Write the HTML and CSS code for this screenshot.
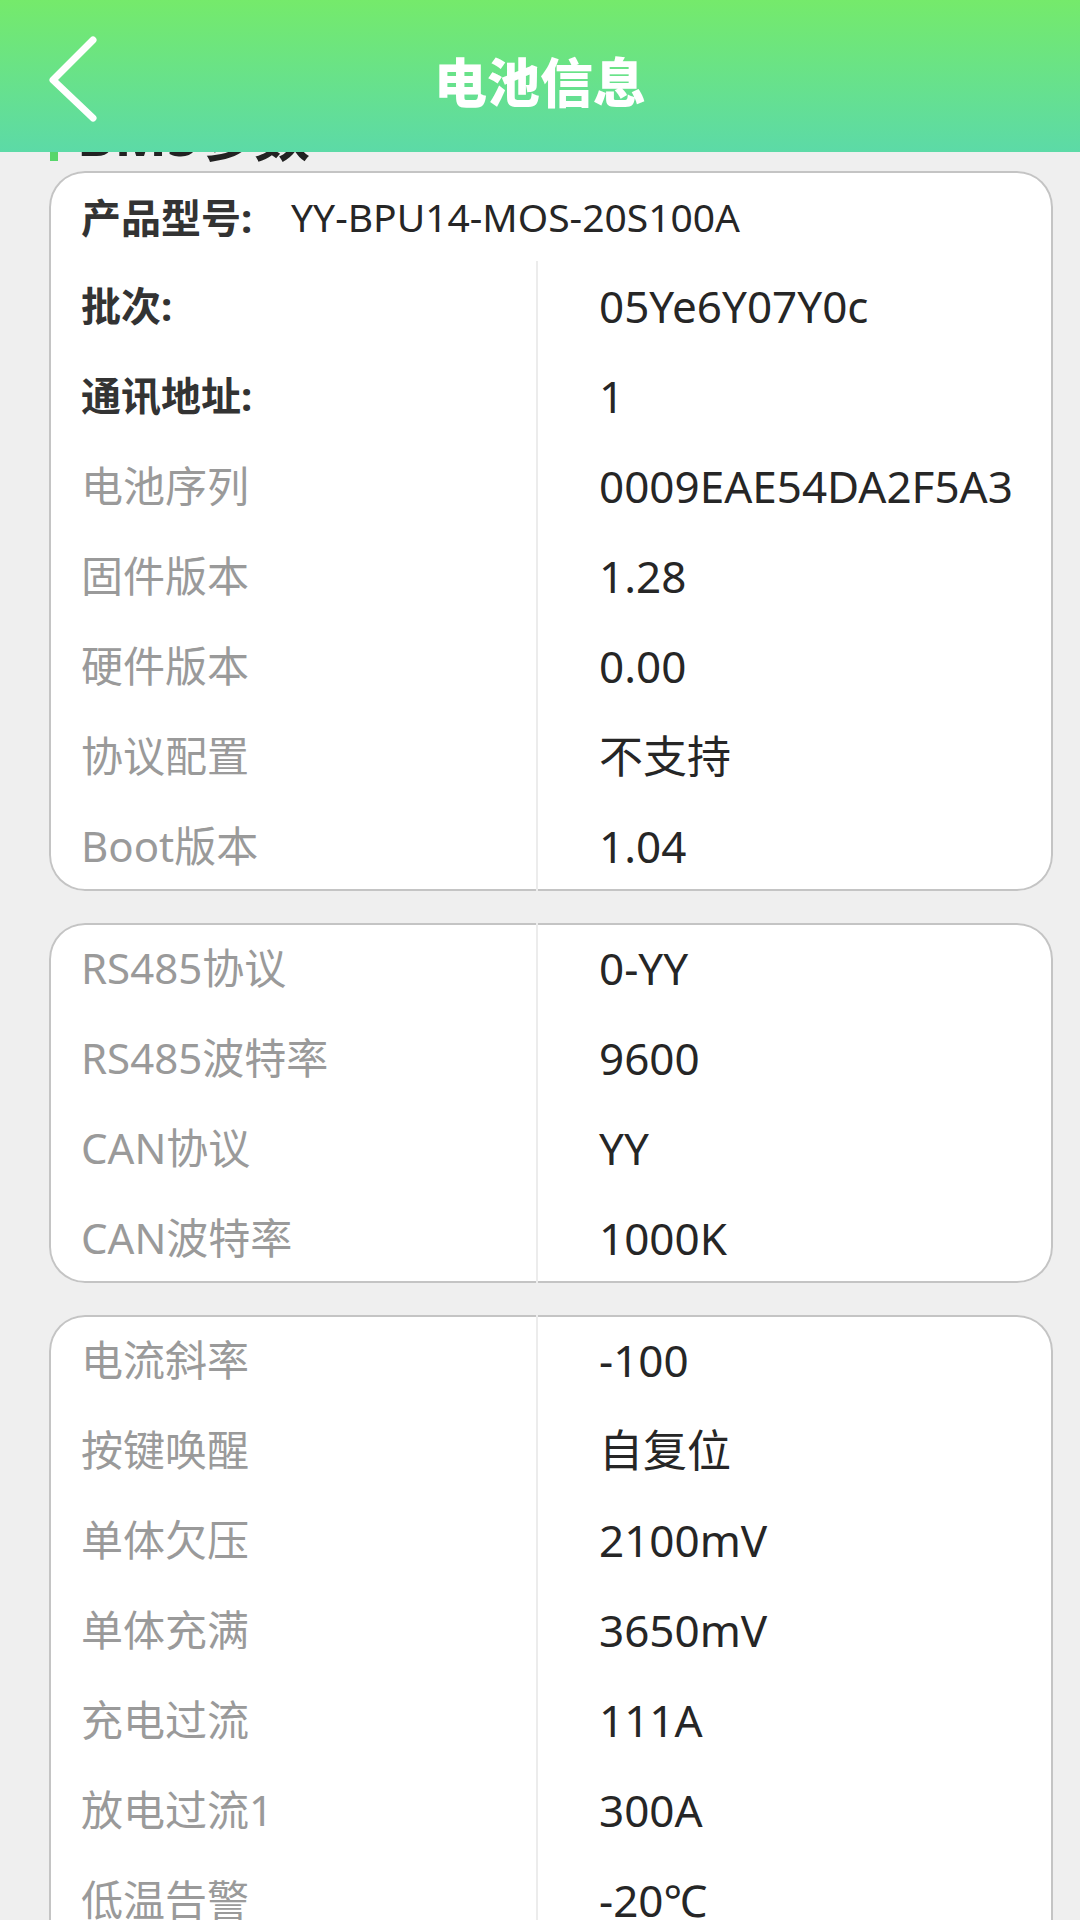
FILE: index.html
```html
<!DOCTYPE html>
<html lang="zh-CN">
  <head>
    <meta charset="UTF-8" />
    <meta name="viewport" content="width=device-width, initial-scale=1.0" />
    <title>电池信息</title>
    <link rel="stylesheet" href="styles.css">
  </head>
  <body>
    <header class="top-bar">
      <div class="back">
        <svg width="60" height="100" viewBox="0 0 60 100">
          <polyline points="48,10 8,50 48,88" fill="none" stroke="#fff" stroke-width="7" stroke-linecap="round" stroke-linejoin="round" />
        </svg>
      </div>
      <h1 class="title">电池信息</h1>
      <div></div>
    </header>

    <main class="content">
      <h2 class="section-title">BMS参数</h2>

      <div class="card">
        <div class="model">
          <span class="model-label">产品型号:</span>
          <span class="model-value">YY-BPU14-MOS-20S100A</span>
        </div>
        <div class="label strong">批次:</div>
        <div class="value">05Ye6Y07Y0c</div>
        <div class="label strong">通讯地址:</div>
        <div class="value">1</div>
        <div class="label">电池序列</div>
        <div class="value">0009EAE54DA2F5A3</div>
        <div class="label">固件版本</div>
        <div class="value">1.28</div>
        <div class="label">硬件版本</div>
        <div class="value">0.00</div>
        <div class="label">协议配置</div>
        <div class="value">不支持</div>
        <div class="label">Boot版本</div>
        <div class="value">1.04</div>
      </div>

      <div class="card">
        <div class="label">RS485协议</div>
        <div class="value">0-YY</div>
        <div class="label">RS485波特率</div>
        <div class="value">9600</div>
        <div class="label">CAN协议</div>
        <div class="value">YY</div>
        <div class="label">CAN波特率</div>
        <div class="value">1000K</div>
      </div>

      <div class="card">
        <div class="label">电流斜率</div>
        <div class="value">-100</div>
        <div class="label">按键唤醒</div>
        <div class="value">自复位</div>
        <div class="label">单体欠压</div>
        <div class="value">2100mV</div>
        <div class="label">单体充满</div>
        <div class="value">3650mV</div>
        <div class="label">充电过流</div>
        <div class="value">111A</div>
        <div class="label">放电过流1</div>
        <div class="value">300A</div>
        <div class="label">低温告警</div>
        <div class="value">-20℃</div>
        <div class="label">高温告警</div>
        <div class="value">60℃</div>
      </div>
    </main>
  </body>
</html>
```

FILE: styles.css
```css
body {
  margin: 0;
  background: #efefef;
  font-family: 'Noto Sans', 'Noto Sans CJK SC', sans-serif;
  color: #262626;
}
/* ヘッダーは固定でコンテンツの上に重なる */
.top-bar {
  position: fixed;
  top: 0;
  left: 0;
  right: 0;
  height: 152px;
  box-sizing: border-box;
  padding-top: 8px;
  background: linear-gradient(to bottom, #75ea6b, #5cdaa7);
  display: grid;
  grid-template-columns: 1fr auto 1fr;
  align-items: center;
  z-index: 10;
}
.back {
  padding-left: 45px;
  display: flex;
  align-items: center;
}
.title {
  margin: 0;
  color: #fff;
  font-family: 'Noto Sans CJK SC', sans-serif;
  font-size: 53px;
  font-weight: 900;
  line-height: 1;
}
.content {
  padding: 106px 27px 0 49px;
}
.section-title {
  margin: 0;
  display: flex;
  align-items: center;
  gap: 19px;
  height: 56px;
  font-size: 56px;
  line-height: 56px;
  font-weight: bold;
  color: #222;
}
.section-title::before {
  content: '';
  width: 8px;
  height: 48px;
  margin-left: 1px;
  margin-top: 6px;
  background: #57d66b;
}
.card {
  margin-top: 9px;
  margin-bottom: 32px;
  background: #fff;
  border-radius: 36px;
  box-shadow: inset 0 0 0 2px #c4c4c4;
  display: grid;
  grid-template-columns: 487px 1fr;
  overflow: hidden;
}
.model {
  grid-column: 1 / -1;
  height: 90px;
  display: flex;
  align-items: center;
  padding-left: 32px;
}
.model-label {
  font-size: 40px;
  font-weight: bold;
  color: #333;
  width: 210px;
}
.model-value {
  font-size: 39px;
  color: #262626;
}
.label {
  height: 90px;
  line-height: 90px;
  padding-left: 32px;
  font-size: 42px;
  color: #9a9a9a;
}
.label.strong {
  color: #333;
  font-weight: bold;
  font-size: 40px;
}
.value {
  height: 90px;
  line-height: 90px;
  padding-left: 61px;
  border-left: 2px solid #ececec;
  font-size: 44px;
  color: #262626;
}
```
